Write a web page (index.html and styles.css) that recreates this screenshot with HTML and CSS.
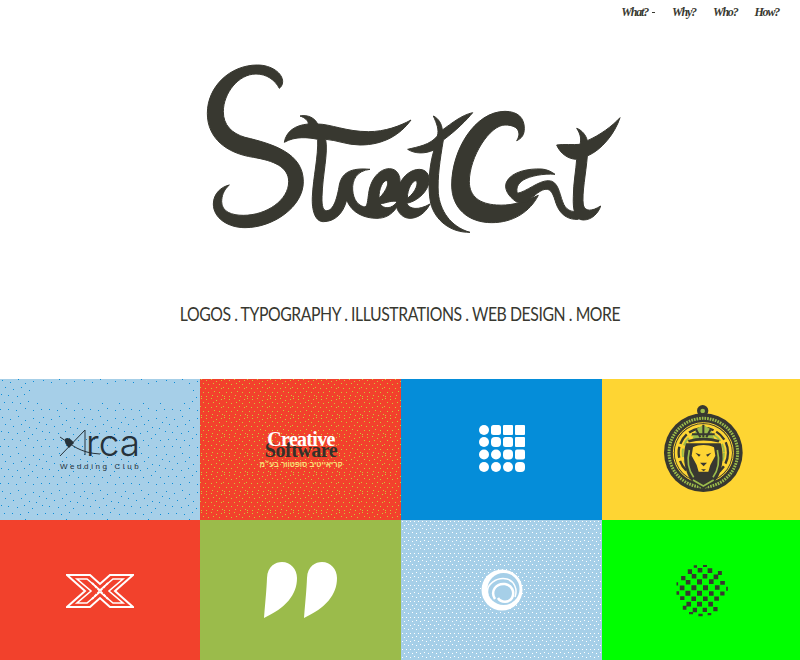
FILE: index.html
```html
<!DOCTYPE html>
<html lang="en">
<head>
<meta charset="utf-8">
<title>StreetCat</title>
<link rel="stylesheet" href="styles.css">
</head>
<body>
<header class="top">
  <nav class="nav">
    <a class="nav-link" href="#">What?<span class="caret"></span></a>
    <a class="nav-link" href="#">Why?</a>
    <a class="nav-link" href="#">Who?</a>
    <a class="nav-link" href="#">How?</a>
  </nav>
  <svg class="logo" viewBox="-540 0 2400 600" role="img" aria-label="StreetCat">
    <path d="M298 115C285 90 260 72 228 72C175 72 130 130 130 185C130 225 155 250 195 262C280 282 370 310 370 395C370 470 280 533 195 533C145 533 100 505 100 462C100 430 125 410 148 405C130 420 125 440 125 455C125 485 155 496 190 496C260 496 326 450 326 395C326 350 280 332 220 322C140 310 82 265 82 190C82 110 150 45 232 45C275 45 308 70 308 95C308 105 302 112 298 115Z"/>
    <path d="M313 277C318 245 345 225 385 222C385 212 375 203 360 198C385 193 405 205 413 222C450 222 500 245 565 245C615 245 660 228 693 210C660 255 610 285 540 285C500 285 470 270 437 268C445 310 428 370 426 440C425 470 430 482 440 482C462 482 472 440 478 405C485 370 510 352 570 358C530 362 516 390 518 420C520 450 535 470 560 472L590 505C555 505 515 490 500 450C490 490 465 515 430 515C405 515 395 480 397 440C400 380 415 320 413 268C385 262 345 258 313 277Z"/>
    <path fill-rule="evenodd" d="M555 470C562 470 563 450 566 430C572 385 600 356 628 356C650 356 662 375 660 400C672 375 695 358 718 358C745 358 752 385 745 405C735 435 705 455 680 460C688 478 715 482 750 462C735 492 710 505 690 505C670 505 655 490 650 472C635 495 615 505 590 505ZM597 445C596 415 610 390 620 392C628 395 622 420 597 445ZM682 445C682 415 698 392 708 392C716 395 710 425 682 445ZM600 462C612 478 635 478 652 455C640 450 620 458 600 462Z"/>
    <path d="M760 198C775 205 785 220 787 240C815 220 845 195 878 188C860 210 830 240 790 270C780 330 772 380 775 430C780 480 810 530 870 547C810 548 765 510 752 460C742 410 748 345 762 300C735 312 705 312 683 298C715 290 750 285 772 258C778 240 770 220 760 198Z"/>
    <path d="M1010 272C1022 255 1022 225 975 225C930 225 868 320 868 395C868 440 900 462 950 465C985 467 1020 462 1075 436C1050 485 1000 518 935 518C865 518 815 475 815 405C815 300 885 184 975 184C1015 184 1033 205 1033 235C1033 255 1025 265 1010 272Z"/>
    <path d="M1125 373C1090 370 1050 378 1030 390C1012 402 1008 415 1012 430C1040 425 1075 392 1105 392C1135 392 1138 430 1148 455C1155 478 1175 490 1195 482L1195 508C1165 510 1140 495 1128 460C1120 435 1115 415 1095 418C1075 422 1055 445 1040 458L1010 456C985 440 970 415 980 395C995 365 1045 355 1085 357C1100 358 1115 365 1125 373Z"/>
    <path d="M1190 235C1205 240 1218 255 1222 272C1260 255 1295 230 1320 203C1305 250 1265 300 1222 318C1218 370 1205 430 1210 465C1215 485 1235 485 1262 468C1255 490 1235 510 1210 510C1185 510 1178 480 1180 440C1180 400 1188 360 1190 328C1165 328 1140 310 1130 285C1150 282 1180 285 1200 283C1205 265 1200 250 1190 235Z"/>
  </svg>
  <p class="tagline">LOGOS . TYPOGRAPHY . ILLUSTRATIONS . WEB DESIGN . MORE</p>
</header>
<main class="grid">
  <a class="tile tile-arca" href="#">
    <svg class="mark-arca" viewBox="0 0 100 60">
      <path class="arca-line" d="M10 36L35 10V35M10 17C22 25 30 33 50 34"/>
      <path class="arca-blob" d="M15 19C18 16 22 20 24 23L19 28C16 25 14 22 15 19Z"/>
      <text class="arca-word" x="36" y="36">rca</text>
      <text class="arca-sub" x="10" y="49">Wedding Club</text>
    </svg>
  </a>
  <a class="tile tile-creative" href="#">
    <svg class="mark-creative" viewBox="0 0 90 50">
      <text class="cr-bottom" x="45" y="33">Software</text>
      <text class="cr-top" x="45" y="22">Creative</text>
      <text class="cr-he" x="45" y="43" direction="rtl">קריאייטיב סופטוור בע״מ</text>
    </svg>
  </a>
  <a class="tile tile-blue" href="#">
    <svg class="mark-dots" viewBox="0 0 46 47">
      <rect x="0" y="0" width="10" height="10" rx="5"/><rect x="12" y="0" width="10" height="10" rx="2.5"/><rect x="24" y="0" width="10" height="10" rx="1"/><rect x="36" y="0" width="10" height="10" rx="1"/>
      <rect x="0" y="12" width="10" height="10" rx="5"/><rect x="12" y="12" width="10" height="10" rx="4"/><rect x="24" y="12" width="10" height="10" rx="2.5"/><rect x="36" y="12" width="10" height="10" rx="1"/>
      <rect x="0" y="24.500" width="10" height="10" rx="5"/><rect x="12" y="24.500" width="10" height="10" rx="5"/><rect x="24" y="24.500" width="10" height="10" rx="4"/><rect x="36" y="24.500" width="10" height="10" rx="2"/>
      <rect x="0" y="37" width="10" height="10" rx="5"/><rect x="12" y="37" width="10" height="10" rx="5"/><rect x="24" y="37" width="10" height="10" rx="5"/><rect x="36" y="37" width="10" height="10" rx="4"/>
    </svg>
  </a>
  <a class="tile tile-yellow" href="#">
    <svg class="mark-lion" viewBox="0 0 300 300">
      <circle class="dark" cx="155" cy="32" r="17"/>
      <circle class="green" cx="155" cy="33" r="7"/>
      <circle class="dark" cx="157" cy="158" r="118"/>
      <circle class="ring-text" cx="157" cy="158" r="103"/>
      <circle class="ring-thin" cx="157" cy="158" r="90"/>
      <circle class="inner" cx="157" cy="158" r="86"/>
      <circle class="ring-swirl" cx="157" cy="158" r="74"/>
      <circle class="ring-swirl-b" cx="157" cy="158" r="62"/>
      <path class="dark" d="M105 130C92 170 102 225 125 246L157 268L190 246C212 225 222 170 209 130Z"/>
      <path class="mane" d="M115 150C108 180 112 210 128 232M199 150C206 180 202 210 186 232M126 240L157 258L188 240"/>
      <path class="green" d="M123 120L135 88L157 74L179 88L191 120Z"/>
      <path class="crown" d="M135 88L148 112M179 88L166 112M157 74V112M123 103H191"/>
      <path class="brim" d="M112 124C140 116 175 116 204 124"/>
      <path class="yellow" d="M126 142C145 133 170 133 189 142L193 167L178 195L172 215H143L137 195L122 167Z"/>
      <path class="dark" d="M133 158L149 164L144 170ZM181 158L165 164L170 170ZM147 188H168L158 199ZM150 208H165L158 214Z"/>
    </svg>
  </a>
  <a class="tile tile-red" href="#">
    <svg class="mark-x" viewBox="0 0 68 34">
      <path class="x-a" d="M1 1H24L34 10L44 1H67L49 17L67 33H44L34 24L24 33H1L19 17Z"/>
      <path class="x-b" d="M11 5H21L34 16L47 5H57L43 17L57 29H47L34 18L21 29H11L25 17Z"/>
      <path class="x-c" d="M26 9L42 25M42 9L26 25"/>
    </svg>
  </a>
  <a class="tile tile-green" href="#">
    <svg class="mark-quote" viewBox="0 0 74 56">
      <path d="M0 56C1.500 38 2.500 28 3 16C3.500 4 11.500 0 18 0C26.500 0 33 7 33 16C33 33 21.500 46 0 56Z"/>
      <path d="M40 56C41.500 38 42.500 28 43 16C43.500 4 51.500 0 58 0C66.500 0 73 7 73 16C73 33 61.500 46 40 56Z"/>
    </svg>
  </a>
  <a class="tile tile-pale" href="#">
    <svg class="mark-spiral" viewBox="0 0 42 42">
      <circle class="sp-white" cx="21" cy="21" r="20.500"/>
      <circle class="sp-pale" cx="22.500" cy="20" r="16"/>
      <path class="sp-arc" d="M7 26C4 15 16 8 26 10C33 12 37 20 34 28"/>
      <path class="sp-thin" d="M14 30C9 22 15 14 24 15C31 16 34 23 31 29C28 34 20 34 17 29"/>
    </svg>
  </a>
  <a class="tile tile-lime" href="#">
    <svg class="mark-ball" viewBox="825 135 165 160">
      <path d="M894 181h15v16h-15zM877 199h15v15h-15zM912 199h15v15h-15zM894 216h15v15h-15zM859 216h15v15h-15zM930 217h14v14h-14zM842 200h14v14h-14zM948 199h14v14h-14zM860 183h14v14h-14zM930 181h14v14h-14zM964 186h14v12h-14zM877 233h14v14h-14zM912 233h14v14h-14zM843 232h13v12h-13zM946 233h14v13h-14zM894 249h15v14h-15zM862 249h14v14h-14zM928 249h14v14h-14zM964 218h13v12h-13zM881 267h13v14h-13zM911 267h13v13h-13zM943 265h13v13h-13zM851 261h11v12h-11zM896 147h14v14h-14zM926 148h14v14h-14zM866 151h13v14h-13zM878 165h14v14h-14zM911 165h14v14h-14zM944 167h14v14h-14zM846 171h13v13h-13zM957 156h12v12h-12zM912 138h12v6h-12zM884 139h10v7h-10zM898 285h13v8h-13zM926 283h11v7h-11zM870 280h12v7h-12zM832 217h8v11h-8zM982 204h5v12h-5zM832 190h5v10h-5z"/>
    </svg>
  </a>
</main>
</body>
</html>
```
FILE: styles.css
```css
html, body { margin: 0; padding: 0; background: #fff; }
body { color: #383830; overflow: hidden; }

.top { display: flex; flex-direction: column; height: 379px; }
.nav { display: flex; justify-content: flex-end; gap: 17px; height: 50px; padding: 5px 21px 0 0; box-sizing: border-box; }
.nav-link { font: italic bold 12px/14px "Liberation Serif", serif; letter-spacing: -1.2px; color: #383830; text-decoration: none; }
.caret { display: inline-block; width: 3px; height: 1px; margin: 0 0 3px 4px; background: #383830; }

.logo { display: block; width: 800px; height: 200px; fill: #383830; stroke: #383830; stroke-width: 3; }

.tagline { margin: 50px 0 0; font: 400 20px/26px "Lato", sans-serif; letter-spacing: -.55px; text-align: center; color: #383830; white-space: nowrap; transform: scaleX(.79); }

.grid { display: grid; grid-template-columns: 200px 201px 201px 198px; grid-template-rows: 141px 140px; }
.tile { display: flex; align-items: center; justify-content: center; overflow: hidden; }
.tile-arca {
  background-color: #a6cfe8;
  background-image:
    linear-gradient(#a6cfe8, #a6cfe8),
    url("data:image/svg+xml,%3Csvg xmlns='http://www.w3.org/2000/svg' width='41' height='37' shape-rendering='crispEdges'%3E%3Cpath fill='%230b8dd8' d='M2 1h1v1h-1zM10 3h1v1h-1zM18 0h1v1h-1zM25 4h1v1h-1zM33 2h1v1h-1zM39 6h1v1h-1zM5 8h1v1h-1zM13 10h1v1h-1zM21 8h1v1h-1zM29 11h1v1h-1zM36 12h1v1h-1zM1 15h1v1h-1zM8 16h1v1h-1zM17 17h1v1h-1zM24 15h1v1h-1zM32 18h1v1h-1zM4 23h1v1h-1zM12 23h1v1h-1zM20 24h1v1h-1zM28 22h1v1h-1zM37 24h1v1h-1zM0 30h1v1h-1zM8 30h1v1h-1zM16 31h1v1h-1zM25 29h1v1h-1zM33 31h1v1h-1z'/%3E%3C/svg%3E");
  background-size: 160px 18px, auto;
  background-position: 30px 6px, 0 0;
  background-repeat: no-repeat, repeat;
}
.tile-creative {
  background-color: #f2412c;
  background-image: url("data:image/svg+xml,%3Csvg xmlns='http://www.w3.org/2000/svg' width='23' height='19' shape-rendering='crispEdges'%3E%3Cpath fill='%23c9c83a' d='M1 0h1v1h-1zM6 1h1v1h-1zM11 0h1v1h-1zM16 2h1v1h-1zM21 1h1v1h-1zM3 4h1v1h-1zM8 5h1v1h-1zM13 4h1v1h-1zM19 5h1v1h-1zM0 8h1v1h-1zM5 9h1v1h-1zM11 9h1v1h-1zM16 8h1v1h-1zM21 9h1v1h-1zM3 13h1v1h-1zM8 13h1v1h-1zM14 12h1v1h-1zM19 13h1v1h-1zM1 17h1v1h-1zM6 17h1v1h-1zM12 16h1v1h-1zM17 17h1v1h-1zM22 16h1v1h-1z'/%3E%3C/svg%3E");
}
.tile-blue { background: #058dd9; }
.tile-yellow { background: #fed533; }
.tile-red { background: #f2412c; }
.tile-green { background: #9bbb4b; }
.tile-pale {
  background-color: #a6cfe8;
  background-image: url("data:image/svg+xml,%3Csvg xmlns='http://www.w3.org/2000/svg' width='16' height='16' shape-rendering='crispEdges'%3E%3Cpath fill='%23fff' d='M1 1h1v1h-1zM5 1h1v1h-1zM9 1h1v1h-1zM13 1h1v1h-1zM3 5h1v1h-1zM7 4h1v1h-1zM11 5h1v1h-1zM15 4h1v1h-1zM1 9h1v1h-1zM5 8h1v1h-1zM9 9h1v1h-1zM13 8h1v1h-1zM3 12h1v1h-1zM7 13h1v1h-1zM11 12h1v1h-1zM15 13h1v1h-1z'/%3E%3C/svg%3E");
}
.tile-lime { background: #00ff00; }

.mark-arca { width: 100px; height: 60px; }
.arca-line { fill: none; stroke: #26323a; stroke-width: 1; }
.arca-blob { fill: #26323a; }
.arca-word { font: 300 37px "Inter", sans-serif; fill: #26323a; }
.arca-sub { font: 400 8px "Liberation Sans", sans-serif; letter-spacing: 2.600px; fill: #26323a; }

.mark-creative { width: 90px; height: 50px; margin-top: -1px; }
.cr-top { font: bold 20px "Liberation Serif", serif; letter-spacing: -.7px; text-anchor: middle; fill: #fff; }
.cr-bottom { font: bold 20px "Liberation Serif", serif; letter-spacing: -.5px; text-anchor: middle; fill: #33312a; }
.cr-he { font: bold 7.500px "Liberation Sans", sans-serif; text-anchor: middle; fill: #fbe37a; }

.mark-dots { width: 46px; height: 47px; fill: #fff; margin-top: -2px; }

.mark-lion { width: 100px; height: 100px; }
.dark { fill: #383830; }
.green { fill: #9bbb4b; }
.yellow { fill: #fed533; }
.inner { fill: #fed533; }
.ring-text { fill: none; stroke: #9bbb4b; stroke-width: 9; stroke-dasharray: 5 3; }
.ring-thin { fill: none; stroke: #fed533; stroke-width: 3; }
.ring-swirl { fill: none; stroke: #383830; stroke-width: 7; stroke-dasharray: 34 9; }
.ring-swirl-b { fill: none; stroke: #9bbb4b; stroke-width: 6; stroke-dasharray: 26 10; }
.mane { fill: none; stroke: #9bbb4b; stroke-width: 5; }
.crown { fill: none; stroke: #383830; stroke-width: 6; }
.brim { fill: none; stroke: #383830; stroke-width: 8; }

.mark-x { width: 68px; height: 34px; margin-top: 1px; }
.x-a { fill: none; stroke: #fff; stroke-width: 2; }
.x-b { fill: none; stroke: #fff; stroke-width: 1.600; }
.x-c { fill: none; stroke: #fff; stroke-width: 2; stroke-dasharray: 3 1; }

.mark-quote { width: 74px; height: 56px; fill: #fff; margin-top: -1px; }

.mark-spiral { width: 42px; height: 42px; }
.sp-white { fill: #fff; }
.sp-pale { fill: #a6cfe8; }
.sp-arc { fill: none; stroke: #fff; stroke-width: 1.500; }
.sp-thin { fill: none; stroke: #fff; stroke-width: 2.500; }

.mark-ball { width: 55px; height: 53px; fill: #383830; }
```
